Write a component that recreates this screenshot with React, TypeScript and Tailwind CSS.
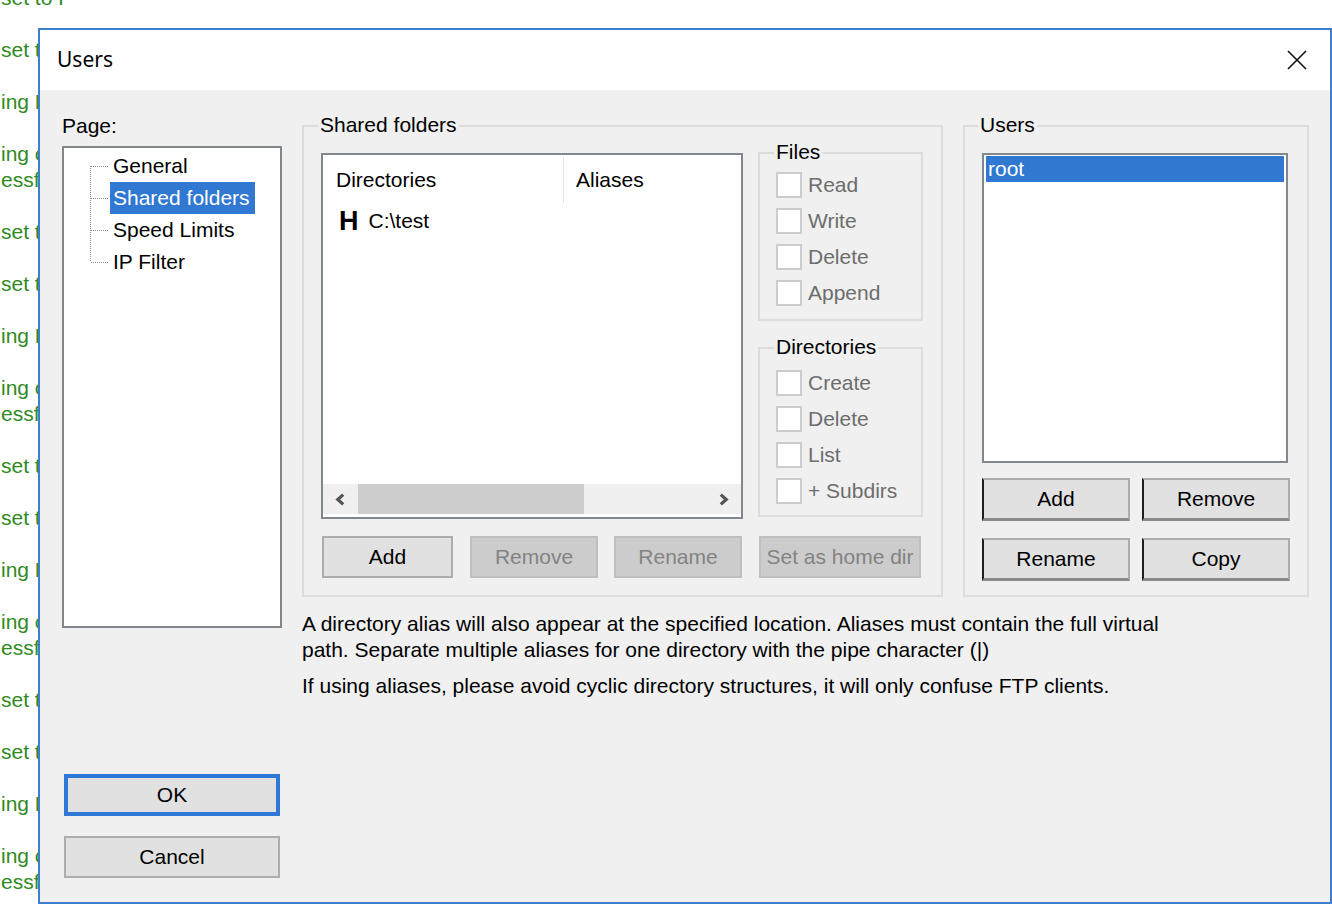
import type { ReactNode } from "react"

const logCycle: string[][] = [
  ["set to FTP server"],
  ["set to FTP server"],
  ["ing FTP session"],
  ["ing connection", "essfully"]
]

function LogBackground() {
  const entries = [...logCycle.slice(1), ...logCycle, ...logCycle, ...logCycle, ...logCycle]
  return (
    <div className="mt-[-15px] flex flex-col text-[21px] leading-[26px] text-[#2f8a23]">
      <div className="mb-[26px] pl-[1px] whitespace-nowrap">set to F</div>
      <div className="w-[38px] overflow-hidden">
        {entries.map((lines, i) => (
          <div key={i} className="mb-[26px] pl-[1px] whitespace-nowrap">
            {lines.map((l, j) => (
              <div key={j}>{l}</div>
            ))}
          </div>
        ))}
      </div>
    </div>
  )
}

function GroupBox({
  label,
  className,
  labelLeft = "left-[14px]",
  children
}: {
  label: string
  className: string
  labelLeft?: string
  children: ReactNode
}) {
  return (
    <div className={`relative border-2 border-[#dcdcdc] ${className}`}>
      <span className={`absolute top-[-15px] ${labelLeft} bg-[#f0f0f0] px-[2px] leading-[26px] text-black`}>{label}</span>
      {children}
    </div>
  )
}

function Check({ label }: { label: string }) {
  return (
    <div className="flex h-[26px] items-center gap-[6px]">
      <span className="h-[26px] w-[26px] border-2 border-[#cccccc] bg-white"></span>
      <span className="leading-[26px] text-[#6d6d6d]">{label}</span>
    </div>
  )
}

function Button({ children, disabled, className }: { children: ReactNode; disabled?: boolean; className: string }) {
  return (
    <div
      className={`flex h-[42px] items-center justify-center border-2 ${
        disabled ? "border-[#bfbfbf] bg-[#cccccc] text-[#838383]" : "border-[#adadad] bg-[#e1e1e1] text-black"
      } ${className}`}
    >
      {children}
    </div>
  )
}

function UserButton({ children }: { children: ReactNode }) {
  return (
    <div className="flex h-[43px] w-[148px] items-center justify-center border-2 border-t-[#adadad] border-r-[#adadad] border-b-[3px] border-b-[#8a8a8a] border-l-[#1e1e1e] bg-[#e1e1e1] text-black">
      {children}
    </div>
  )
}

function TreeRow({ label, kind, selected }: { label: string; kind: "first" | "mid" | "last"; selected?: boolean }) {
  const y1 = kind === "first" ? 16 : 0
  const y2 = kind === "last" ? 16 : 32
  return (
    <div className="flex h-[32px] items-center">
      <svg width="46" height="32" className="shrink-0">
        <line x1="26.5" y1={y1} x2="26.5" y2={y2} stroke="#8a8a8a" strokeWidth="1" strokeDasharray="1 1" />
        <line x1="27" y1="16.5" x2="45" y2="16.5" stroke="#8a8a8a" strokeWidth="1" strokeDasharray="1 1" />
      </svg>
      <span
        className={`flex h-[32px] items-center pr-[5px] pl-[3px] leading-[26px] ${
          selected ? "bg-[#3078d2] text-white" : "text-black"
        }`}
      >
        {label}
      </span>
    </div>
  )
}

function Chevron({ dir }: { dir: "left" | "right" }) {
  return (
    <svg width="13" height="13" viewBox="0 0 12 12">
      <path
        d={dir === "left" ? "M8.5 1.5 L3.5 6 L8.5 10.5" : "M3.5 1.5 L8.5 6 L3.5 10.5"}
        fill="none"
        stroke="#555555"
        strokeWidth="3"
      />
    </svg>
  )
}

export default function App() {
  return (
    <div className="relative h-[908px] w-[1332px] overflow-hidden bg-white font-['Liberation_Sans',Arial,sans-serif] text-[21px]">
      <LogBackground />

      <div className="absolute top-[28px] left-[38px] flex h-[876px] w-[1294px] flex-col border-2 border-[#3d7fcf] bg-[#f0f0f0]">
        <div className="flex h-[60px] items-center justify-between bg-white pr-[23px] pl-[17px]">
          <span className="font-['Noto_Sans',sans-serif] text-[21px] text-black">Users</span>
          <svg width="20" height="20" viewBox="0 0 20 20">
            <path d="M1 1 L19 19 M19 1 L1 19" stroke="#111111" strokeWidth="1.6" fill="none" />
          </svg>
        </div>

        <div className="flex h-[812px]">
          {/* left column */}
          <div className="ml-[22px] flex w-[220px] flex-col">
            <div className="mt-[23px] mb-[7px] leading-[26px] text-black">Page:</div>
            <div className="h-[482px] border-2 border-[#82868d] bg-white pt-[2px]">
              <TreeRow label="General" kind="first" />
              <TreeRow label="Shared folders" kind="mid" selected />
              <TreeRow label="Speed Limits" kind="mid" />
              <TreeRow label="IP Filter" kind="last" />
            </div>
            <div className="mt-[146px] ml-[2px] flex h-[42px] w-[216px] items-center justify-center border-4 border-[#3078d7] bg-[#e1e1e1] text-black">
              OK
            </div>
            <div className="mt-[20px] ml-[2px] flex h-[42px] w-[216px] items-center justify-center border-2 border-[#adadad] bg-[#e1e1e1] text-black">
              Cancel
            </div>
          </div>

          {/* right area */}
          <div className="mt-[35px] ml-[20px] flex flex-col">
            <div className="flex gap-[20px]">
              <GroupBox label="Shared folders" className="h-[472px] w-[641px] pt-[26px] pl-[17px]">
                <div className="flex">
                  <div className="flex h-[366px] w-[422px] flex-col border-2 border-[#828790] bg-white">
                    <div className="flex h-[50px]">
                      <div className="my-[2px] flex w-[241px] items-center border-r border-[#e5e5e5] pl-[13px] text-black">
                        Directories
                      </div>
                      <div className="flex items-center pl-[12px] text-black">Aliases</div>
                    </div>
                    <div className="flex h-[32px] items-center pl-[16px]">
                      <span className="text-[27px] leading-none font-bold text-black">H</span>
                      <span className="ml-[10px] text-black">C:\test</span>
                    </div>
                    <div className="flex-1"></div>
                    <div className="mb-[3px] flex h-[30px] bg-[#f0f0f0]">
                      <div className="flex w-[35px] items-center justify-center">
                        <Chevron dir="left" />
                      </div>
                      <div className="h-full w-[226px] bg-[#cdcdcd]"></div>
                      <div className="flex-1"></div>
                      <div className="flex w-[35px] items-center justify-center">
                        <Chevron dir="right" />
                      </div>
                    </div>
                  </div>

                  <div className="ml-[15px] flex w-[165px] flex-col">
                    <GroupBox label="Files" className="mt-[-1px] flex h-[169px] flex-col gap-[10px] pt-[18px] pl-[16px]">
                      <Check label="Read" />
                      <Check label="Write" />
                      <Check label="Delete" />
                      <Check label="Append" />
                    </GroupBox>
                    <GroupBox label="Directories" className="mt-[26px] flex h-[170px] flex-col gap-[10px] pt-[21px] pl-[16px]">
                      <Check label="Create" />
                      <Check label="Delete" />
                      <Check label="List" />
                      <Check label="+ Subdirs" />
                    </GroupBox>
                  </div>
                </div>

                <div className="mt-[17px] flex">
                  <Button className="ml-[1px] w-[131px]">Add</Button>
                  <Button disabled className="ml-[17px] w-[128px]">
                    Remove
                  </Button>
                  <Button disabled className="ml-[16px] w-[128px]">
                    Rename
                  </Button>
                  <Button disabled className="ml-[17px] w-[162px]">
                    Set as home dir
                  </Button>
                </div>
              </GroupBox>

              <GroupBox label="Users" labelLeft="left-[13px]" className="h-[472px] w-[346px] pt-[26px] pl-[17px]">
                <div className="h-[310px] w-[306px] border-2 border-[#828790] bg-white px-[2px] pt-[1px]">
                  <div className="h-[26px] bg-[#3078d2] pl-[2px] leading-[26px] text-white">root</div>
                </div>
                <div className="mt-[15px] flex gap-[12px]">
                  <UserButton>Add</UserButton>
                  <UserButton>Remove</UserButton>
                </div>
                <div className="mt-[17px] flex gap-[12px]">
                  <UserButton>Rename</UserButton>
                  <UserButton>Copy</UserButton>
                </div>
              </GroupBox>
            </div>

            <div className="mt-[14px] leading-[26px] whitespace-nowrap text-black">
              A directory alias will also appear at the specified location. Aliases must contain the full virtual
              <br />
              path. Separate multiple aliases for one directory with the pipe character (|)
            </div>
            <div className="mt-[10px] leading-[26px] whitespace-nowrap text-black">
              If using aliases, please avoid cyclic directory structures, it will only confuse FTP clients.
            </div>
          </div>
        </div>
      </div>
    </div>
  )
}
